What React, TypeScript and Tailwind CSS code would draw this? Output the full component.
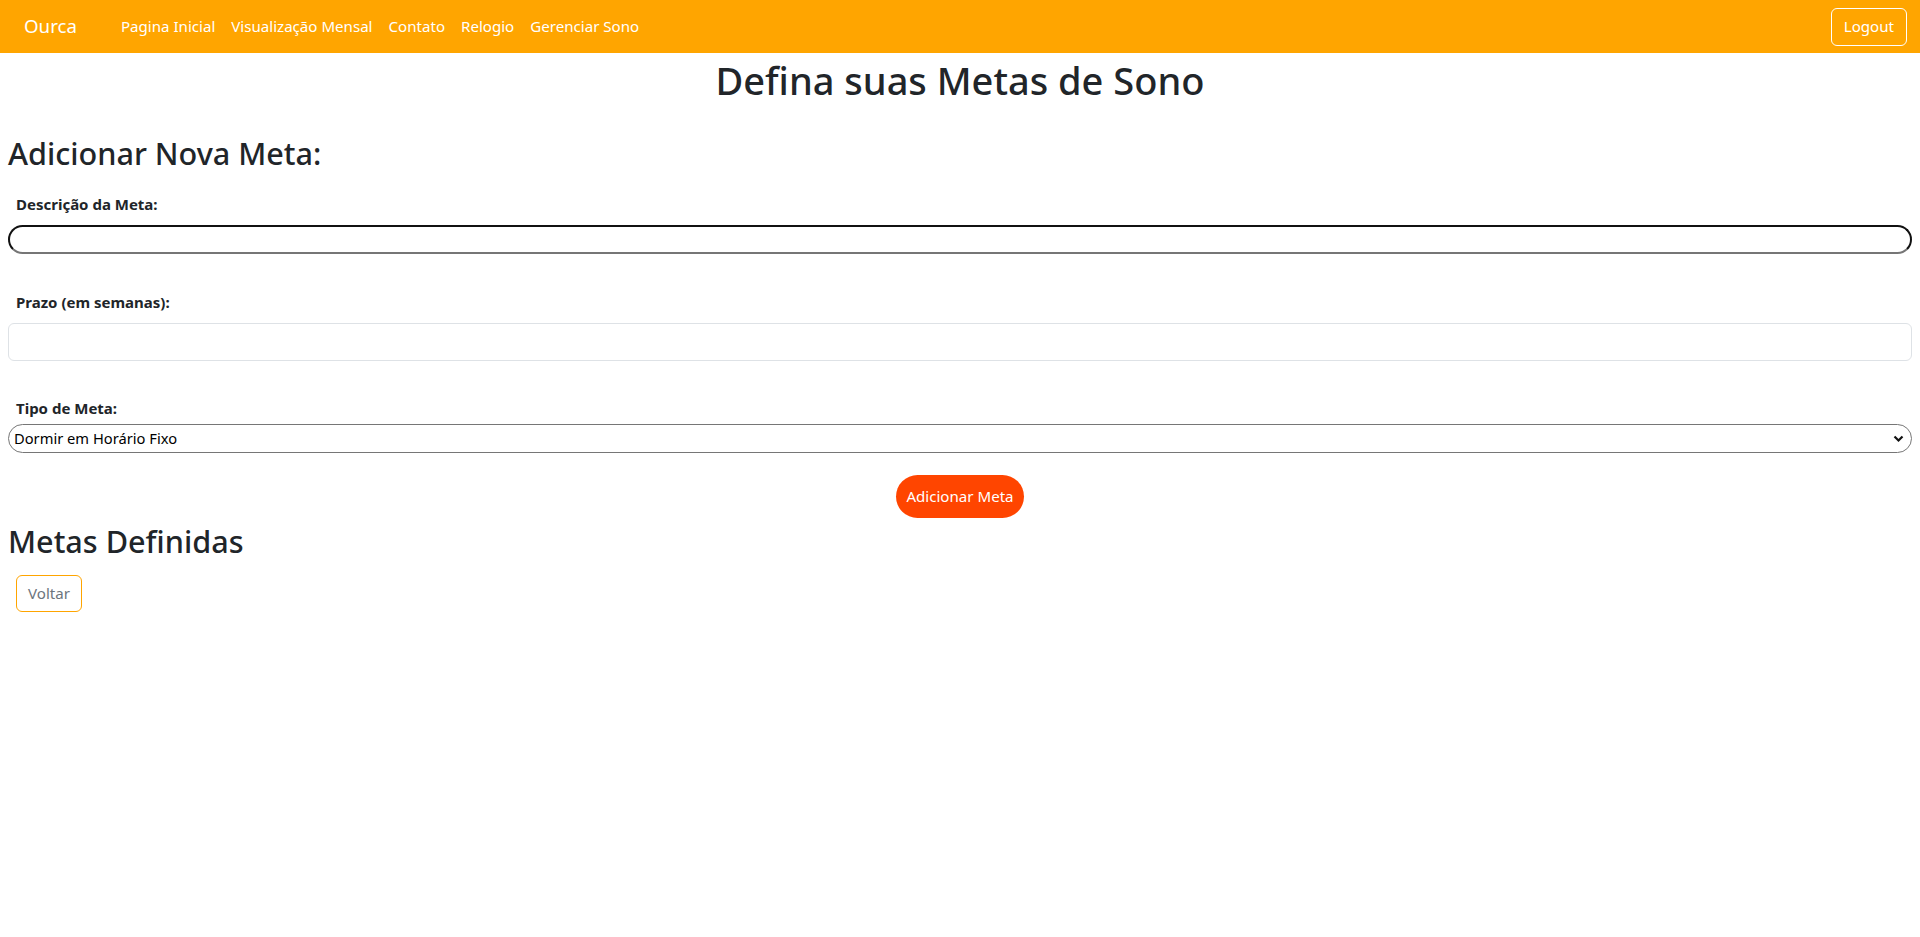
import React from "react";

export default function App() {
  const links = ["Pagina Inicial", "Visualização Mensal", "Contato", "Relogio", "Gerenciar Sono"];
  return (
    <div className="min-h-screen bg-white text-[#212529]" style={{ fontFamily: '"Noto Sans", "Liberation Sans", sans-serif' }}>
      <nav className="h-[53px] bg-[#FFA500] flex items-center pl-[24px] pr-[13px]">
        <span className="text-[18.7px] text-white mr-[36px]">Ourca</span>
        <ul className="flex items-center">
          {links.map((l) => (
            <li key={l}>
              <a className="block px-2 py-2 text-[15.1px] text-white">{l}</a>
            </li>
          ))}
        </ul>
        <button className="ml-auto h-[38px] px-[12px] border border-white rounded-[6px] text-white text-[15.1px]">Logout</button>
      </nav>
      <main className="px-[8px]">
        <h1 className="text-center text-[38px] font-medium leading-[48px] mt-[3px] mb-[30px]">Defina suas Metas de Sono</h1>
        <h2 className="text-[30.6px] font-medium leading-[38px] mb-[21px]">Adicionar Nova Meta:</h2>
        <form className="flex flex-col">
          <label className="px-[8px] text-[15px] font-bold leading-[22px] mb-[10px]">Descrição da Meta:</label>
          <input className="h-[29px] w-full rounded-full border-2 border-[#111] border-b-[#767676] outline-none" />
          <label className="px-[8px] text-[15px] font-bold leading-[22px] mt-[37px] mb-[10px]">Prazo (em semanas):</label>
          <input className="h-[38px] w-full rounded-[6px] border border-[#dee2e6] outline-none" />
          <label className="px-[8px] text-[15px] font-bold leading-[22px] mt-[36px] mb-[5px]">Tipo de Meta:</label>
          <div className="relative">
            <select className="appearance-none h-[29px] w-full rounded-full border border-[#767676] pl-[5px] text-[14.7px] text-black bg-white outline-none">
              <option>Dormir em Horário Fixo</option>
            </select>
            <svg className="absolute right-[8px] top-[11px] pointer-events-none" width="11" height="8" viewBox="0 0 11 8">
              <path d="M1.5 1.5 L5.5 5.5 L9.5 1.5" fill="none" stroke="#111" strokeWidth="2.2" />
            </svg>
          </div>
          <div className="flex justify-center mt-[22px]">
            <button type="button" className="h-[43px] px-[10px] rounded-full bg-[#FF4500] text-white text-[15.1px]">Adicionar Meta</button>
          </div>
        </form>
        <h2 className="text-[30.6px] font-medium leading-[38px] mt-[4px] mb-[15px]">Metas Definidas</h2>
        <button className="ml-[8px] h-[37px] px-[11px] rounded-[6px] border border-[#FFA500] text-[#6c757d] text-[15.1px]">Voltar</button>
      </main>
    </div>
  );
}
